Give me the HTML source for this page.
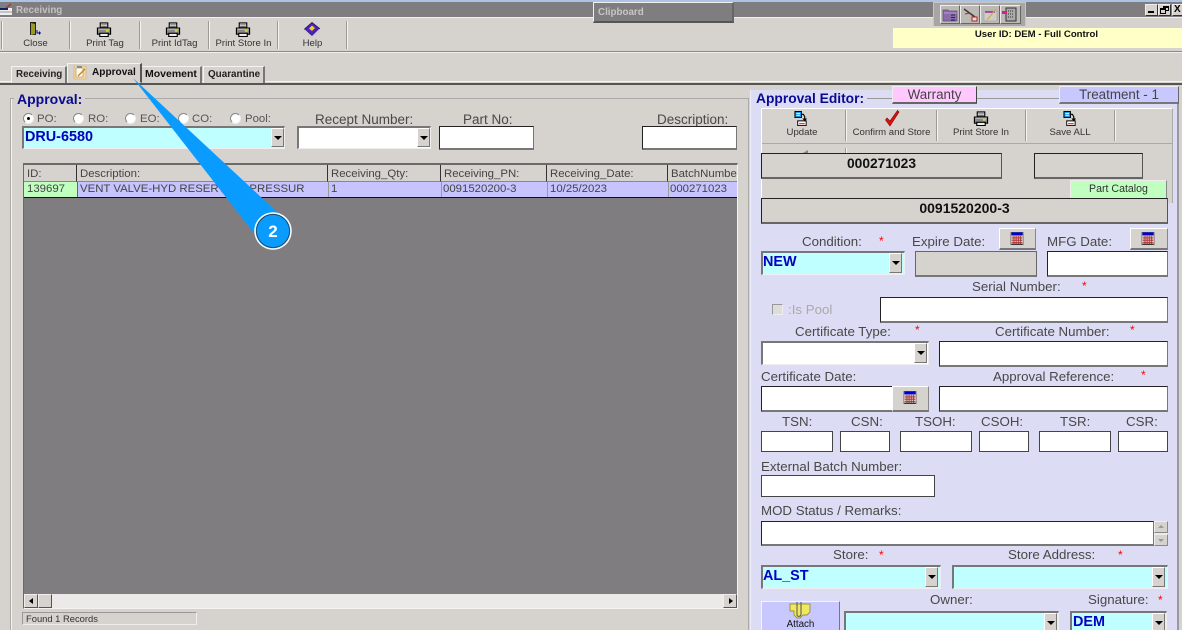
<!DOCTYPE html>
<html><head><meta charset="utf-8"><style>
html,body{margin:0;padding:0;background:#fff}
#p{position:relative;width:1182px;height:630px;overflow:hidden;background:#d6d3ce;font-family:"Liberation Sans",sans-serif;color:#444}
#p div,#p svg,#p span.a{position:absolute;box-sizing:border-box;white-space:nowrap}
.l{font-size:13.3px;line-height:15px;color:#484848}
.t{font-size:9.6px;line-height:11px;color:#333;text-align:center}
.sep{width:2px;border-left:1px solid #9c9a96;border-right:1px solid #f4f3f0}
.i{background:#fff;border:1px solid #777;border-top:1px solid #222;border-left:1px solid #222;border-bottom:2px solid #777}
.c{background:#c0ffff;border:2px solid #777;border-bottom:1px solid #eee;border-right:1px solid #eee;color:#0000c0;font-weight:bold;font-size:14.4px;line-height:17px;padding-left:0}
.w{background:#fff}
.b{background:#d6d3ce;width:13px;border:1px solid #777;border-top-color:#fff;border-left-color:#fff}
.b:after{content:"";position:absolute;left:2px;top:50%;margin-top:-2px;border:4px solid transparent;border-top:4px solid #000;border-bottom:0}
.r{color:#f00;font-size:12px;line-height:12px}
.g{font-size:11.4px;line-height:15px;color:#444}
.h{height:17px;top:165px;background:#d6d3ce;border-right:1px solid #333;border-bottom:1px solid #888;padding:2px 0 0 3px;font-size:11.4px;line-height:14px;color:#444;overflow:hidden}
.o{background:#d6d3ce;border:1px solid #555;border-top:1px solid #222;border-left:1px solid #222;border-bottom:2px solid #666;color:#111;font-size:14px;line-height:16px;text-align:center}
.rd{width:11px;height:11px;border-radius:50%;background:#fff;border:1px solid #888;border-right-color:#eee;border-bottom-color:#eee}
.cal{background:#d6d3ce;border:1px solid #888;border-top-color:#fff;border-left-color:#fff;border-bottom:2px solid #777}
</style></head><body><div id="p">
<svg width="0" height="0" style="display:none"><defs>
<symbol id="pr" viewBox="0 0 16 16"><path d="M4 1h8v5H4z" fill="#eee" stroke="#000" stroke-width="1.200"/><path d="M5 3h6M5 4.800h6" stroke="#444" stroke-width=".8"/><path d="M1 6.500h14v6.500H1z" fill="#888" stroke="#000" stroke-width="1.200"/><path d="M2 7.500h12" stroke="#ddd"/><path d="M3.500 12h9v3.500h-9z" fill="#eee" stroke="#000" stroke-width="1.200"/><path d="M10 9.500h3" stroke="#ee0" stroke-width="1.500"/></symbol>
<symbol id="sv" viewBox="0 0 14 16"><path d="M0.500 0.500h7v6.500h-7z" fill="#0a8fe8" stroke="#000" stroke-width="1"/><path d="M2 2.500h4M2 4.500h4" stroke="#fff"/><path d="M7 3.500h2.500l1.500 2.500v3" fill="none" stroke="#000" stroke-width="1.200"/><path d="M8.500 8l2.500 3 2.500-3z" fill="#000"/><path d="M3.500 10.500h9v5h-9z" fill="#fff" stroke="#000"/><path d="M5 13.500h6" stroke="#e33" stroke-width="1.300"/></symbol>
<symbol id="cl" viewBox="0 0 16 16"><path d="M1 1h14v14H1z" fill="#ddd" stroke="#444" stroke-width=".6"/><path d="M1.500 1h13v3.500h-13z" fill="#0000c8"/><path d="M2 5h12v9H2z" fill="#e8d8d0"/><path d="M2 6.500h12M2 8.500h12M2 10.500h12M2 12.500h12M4.500 5v9M7 5v9M9.500 5v9M12 5v9" stroke="#a33" stroke-width=".9"/><path d="M1.500 14.500h13" stroke="#222" stroke-width="1.200"/></symbol>
</defs></svg>

<!-- title bar -->
<div style="left:0;top:0;width:1182px;height:2px;background:#a9c4e4"></div>
<div style="left:0;top:2px;width:1182px;height:15px;background:#807d80"></div>
<div style="left:0;top:17px;width:1182px;height:1px;background:#f1f0ed"></div>
<svg style="left:0;top:3px" width="13" height="13" viewBox="0 0 13 13"><path d="M0 5h12v7H0z" fill="#eee"/><path d="M0 5h8v2H0z" fill="#0a246a"/><path d="M0 9h12" stroke="#999"/><path d="M6 5l5-4" stroke="#a33" stroke-width="1.400"/></svg>
<div style="left:16px;top:4px;font-size:9.8px;line-height:13px;font-weight:bold;color:#c4c2c0">Receiving</div>
<div style="left:593px;top:2px;width:141px;height:21px;background:#807d80;border:1px solid #f0efec;border-right:2px solid #666;border-bottom:2px solid #555"></div>
<div style="left:598px;top:7px;font-size:9.800px;line-height:12px;font-weight:bold;color:#c8c6c4">Clipboard</div>
<div style="left:933px;top:2px;width:93px;height:24px;background:#a8a6a4;border:1px solid #c8c6c4;border-bottom:0"></div>
<div style="left:940px;top:5px;width:20px;height:19px;background:#bdbab6;border:1px solid #eee;border-right-color:#666;border-bottom-color:#666"></div>
<div style="left:960px;top:5px;width:20px;height:19px;background:#bdbab6;border:1px solid #eee;border-right-color:#666;border-bottom-color:#666"></div>
<div style="left:980px;top:5px;width:20px;height:19px;background:#bdbab6;border:1px solid #eee;border-right-color:#666;border-bottom-color:#666"></div>
<div style="left:1000px;top:5px;width:21px;height:19px;background:#bdbab6;border:1px solid #eee;border-right-color:#666;border-bottom-color:#666"></div>
<svg style="left:942px;top:7px" width="17" height="15" viewBox="0 0 17 15"><path d="M1 3h5l1 1h8v10H1z" fill="#8a6ca8" stroke="#5c4a78" stroke-width=".7"/><path d="M2 6h13" stroke="#b49acc"/><path d="M9 8h4M9 10.500h4M9 13h4" stroke="#2d1f55" stroke-width=".9" fill="none"/></svg>
<svg style="left:962px;top:7px" width="17" height="15" viewBox="0 0 17 15"><path d="M2 2l11 8" stroke="#3a3a3a" stroke-width="1.500"/><path d="M3 7l5-1M10 10h5v4h-5z" fill="#ddd" stroke="#b22" stroke-width="1"/></svg>
<svg style="left:982px;top:7px" width="17" height="15" viewBox="0 0 17 15"><path d="M2 4h13v10H2z" fill="#cfcdc8" stroke="#999" stroke-width=".6"/><path d="M3 5h10" stroke="#a4309a" stroke-width="1.600"/><path d="M5 13l9-11" stroke="#c9b040" stroke-width="1.200"/></svg>
<svg style="left:1002px;top:7px" width="17" height="15" viewBox="0 0 17 15"><path d="M4 1h10v13H4z" fill="#aaa" stroke="#333"/><path d="M6 4h6M6 7h6M6 10h6" stroke="#333" stroke-dasharray="1 1"/><path d="M0 4h5v3H0z" fill="#d0208a"/></svg>
<div style="left:1145px;top:4px;width:13px;height:12px;background:#d6d3ce;border:1px solid #eee;border-right-color:#333;border-bottom-color:#333"></div>
<div style="left:1148px;top:11px;width:6px;height:2px;background:#000"></div>
<div style="left:1158px;top:4px;width:13px;height:12px;background:#d6d3ce;border:1px solid #eee;border-right-color:#333;border-bottom-color:#333"></div>
<div style="left:1163px;top:6px;width:6px;height:5px;border:1px solid #000;border-top-width:2px"></div>
<div style="left:1160px;top:8px;width:6px;height:6px;border:1px solid #000;border-top-width:2px;background:#d6d3ce"></div>
<div style="left:1172px;top:4px;width:10px;height:12px;background:#d6d3ce;border:1px solid #eee;border-bottom-color:#333;border-right:0"></div>
<div style="left:1174px;top:4px;font-size:10px;line-height:12px;font-weight:bold;color:#000">X</div>

<!-- toolbar -->
<div style="left:0;top:51px;width:1182px;height:1px;background:#8c8a86"></div>
<div style="left:0;top:52px;width:1182px;height:1px;background:#f1f0ed"></div>
<div class="sep" style="left:1px;top:21px;height:28px"></div>
<div class="sep" style="left:69px;top:21px;height:28px"></div>
<div class="sep" style="left:139px;top:21px;height:28px"></div>
<div class="sep" style="left:208px;top:21px;height:28px"></div>
<div class="sep" style="left:277px;top:21px;height:28px"></div>
<div class="sep" style="left:346px;top:21px;height:28px"></div>
<svg style="left:27px;top:21px" width="16" height="16" viewBox="0 0 16 16"><path d="M3 1h6v13H3z" fill="#222"/><path d="M4 2l4 1v10l-4 1z" fill="#9a9a20"/><path d="M10 9v3h3" fill="none" stroke="#0000b0"/><path d="M12 10l2 2-2 2z" fill="#0000b0"/></svg>
<svg style="left:96px;top:22px" width="16" height="15"><use href="#pr"/></svg>
<svg style="left:165px;top:22px" width="16" height="15"><use href="#pr"/></svg>
<svg style="left:235px;top:22px" width="16" height="15"><use href="#pr"/></svg>
<svg style="left:304px;top:22px" width="16" height="16" viewBox="0 0 16 16"><path d="M0.500 7L8 0.500l7.500 6L8 13.500z" fill="#5020c0" stroke="#201060" stroke-width=".8"/><path d="M5 6.500l3-3 3 2.500-3 3z" fill="#f0d020"/><path d="M0.500 8l7.500 7 7.500-7.500" fill="none" stroke="#ccc" stroke-width="1.500"/></svg>
<div class="t" style="left:2px;top:38px;width:67px">Close</div>
<div class="t" style="left:71px;top:38px;width:68px">Print Tag</div>
<div class="t" style="left:141px;top:38px;width:67px">Print IdTag</div>
<div class="t" style="left:210px;top:38px;width:67px">Print Store In</div>
<div class="t" style="left:279px;top:38px;width:67px">Help</div>
<div style="left:893px;top:28px;width:289px;height:20px;background:#ffffc8"></div>
<div style="left:893px;top:29px;width:205px;text-align:right;font-size:9.6px;line-height:12px;font-weight:bold;color:#111">User ID: DEM - Full Control</div>

<!-- tabs -->
<div style="left:0;top:81px;width:1182px;height:1px;background:#f4f3f0"></div>
<div style="left:0;top:83px;width:1182px;height:2px;background:#555"></div>
<div style="left:11px;top:66px;width:56px;height:17px;background:#d6d3ce;border:1px solid #f4f3f0;border-right:2px solid #777;border-bottom:0"></div>
<div style="left:67px;top:63px;width:75px;height:20px;background:#d6d3ce;border:1px solid #f4f3f0;border-right:2px solid #555;border-bottom:1px solid #d6d3ce"></div>
<div style="left:142px;top:66px;width:60px;height:17px;background:#d6d3ce;border-right:2px solid #777;border-top:1px solid #f4f3f0"></div>
<div style="left:203px;top:66px;width:62px;height:17px;background:#d6d3ce;border:1px solid #f4f3f0;border-right:2px solid #777;border-bottom:0"></div>
<div style="left:16px;top:68px;font-size:9.800px;line-height:13px;font-weight:bold;color:#222">Receiving</div>
<svg style="left:73px;top:65px" width="15" height="15" viewBox="0 0 15 15"><path d="M1 1h12v13H1z" fill="#f4d8a8" stroke="#d9a860" stroke-width=".6"/><path d="M3 3h7v9H3z" fill="#fffbe8" stroke="#888" stroke-width=".6"/><path d="M4 1h5v2H4z" fill="#888"/><path d="M5 11l7-7" stroke="#d88000" stroke-width="1.300"/></svg>
<div style="left:92px;top:66px;font-size:10.100px;line-height:13px;font-weight:bold;color:#111">Approval</div>
<div style="left:145px;top:68px;font-size:10.500px;line-height:13px;font-weight:bold;color:#111">Movement</div>
<div style="left:208px;top:68px;font-size:9.900px;line-height:13px;font-weight:bold;color:#222">Quarantine</div>

<!-- left group -->
<div style="left:10px;top:98px;width:739px;height:532px;border-top:1px solid #aaa;border-left:1px solid #aaa;border-right:1px solid #aaa"></div>
<div style="left:11px;top:99px;width:1px;height:531px;background:#f4f3f0"></div>
<div style="left:14px;top:91px;padding:0 3px;background:#d6d3ce;color:#0a0a90;font-size:14px;font-weight:bold;line-height:16px">Approval:</div>

<div class="rd" style="left:23px;top:113px"></div><div style="left:27px;top:117px;width:3px;height:3px;background:#000;border-radius:50%"></div>
<div class="rd" style="left:73px;top:113px"></div><div class="rd" style="left:125px;top:113px"></div><div class="rd" style="left:178px;top:113px"></div><div class="rd" style="left:230px;top:113px"></div>
<div class="g" style="left:37px;top:112px;color:#555">PO:</div>
<div class="g" style="left:88px;top:112px;color:#555">RO:</div>
<div class="g" style="left:140px;top:112px;color:#555">EO:</div>
<div class="g" style="left:192px;top:112px;color:#555">CO:</div>
<div class="g" style="left:245px;top:112px;color:#555">Pool:</div>

<div class="c" style="left:22px;top:126px;width:263px;height:23px;line-height:19px;padding-left:1px">DRU-6580</div>
<div class="b" style="left:271px;top:128px;height:19px"></div>
<div class="l" style="left:315px;top:112px;font-size:13.500px">Recept Number:</div>
<div class="c w" style="left:297px;top:126px;width:134px;height:23px"></div>
<div class="b" style="left:417px;top:128px;height:19px"></div>
<div class="l" style="left:463px;top:112px;font-size:13.500px">Part No:</div>
<div class="i" style="left:439px;top:126px;width:95px;height:24px"></div>
<div class="l" style="left:657px;top:112px;font-size:13.500px">Description:</div>
<div class="i" style="left:642px;top:126px;width:95px;height:24px"></div>

<!-- grid -->
<div style="left:23px;top:163px;width:715px;height:446px;background:#807d80;border-top:2px solid #6a6a6a;border-left:1px solid #6a6a6a;border-right:1px solid #f4f3f0;border-bottom:1px solid #f4f3f0"></div>
<div class="h" style="left:24px;width:53px">ID:</div>
<div class="h" style="left:77px;width:251px">Description:</div>
<div class="h" style="left:328px;width:113px">Receiving_Qty:</div>
<div class="h" style="left:441px;width:106px">Receiving_PN:</div>
<div class="h" style="left:547px;width:121px">Receiving_Date:</div>
<div class="h" style="left:668px;width:69px;border-right:0">BatchNumbe</div>
<div style="left:24px;top:182px;width:713px;height:15px;background:#c6c3ff"></div>
<div style="left:24px;top:182px;width:53px;height:15px;background:#c0ffc0"></div>
<div style="left:24px;top:197px;width:713px;height:1px;background:#111"></div>
<div style="left:77px;top:182px;width:1px;height:15px;background:#666"></div>
<div style="left:328px;top:182px;width:1px;height:15px;background:#999"></div>
<div style="left:441px;top:182px;width:1px;height:15px;background:#999"></div>
<div style="left:547px;top:182px;width:1px;height:15px;background:#999"></div>
<div style="left:668px;top:182px;width:1px;height:15px;background:#999"></div>
<div class="g" style="left:27px;top:182px">139697</div>
<div class="g" style="left:80px;top:182px">VENT VALVE-HYD RESERVOIR PRESSUR</div>
<div class="g" style="left:331px;top:182px">1</div>
<div class="g" style="left:443px;top:182px">0091520200-3</div>
<div class="g" style="left:550px;top:182px">10/25/2023</div>
<div class="g" style="left:670px;top:182px">000271023</div>
<div style="left:24px;top:594px;width:713px;height:14px;background:#eceae8"></div>
<div style="left:24px;top:594px;width:14px;height:14px;background:#d6d3ce;border:1px solid #eee;border-right-color:#555;border-bottom-color:#555"></div>
<div style="left:29px;top:598px;border:3px solid transparent;border-right:4px solid #000;border-left:0"></div>
<div style="left:38px;top:594px;width:14px;height:14px;background:#d6d3ce;border:1px solid #eee;border-right-color:#555;border-bottom-color:#555"></div>
<div style="left:723px;top:594px;width:14px;height:14px;background:#d6d3ce;border:1px solid #eee;border-right-color:#555;border-bottom-color:#555"></div>
<div style="left:729px;top:598px;border:3px solid transparent;border-left:4px solid #000;border-right:0"></div>
<div style="left:22px;top:612px;width:175px;height:13px;border:1px solid #eee;border-top-color:#999;border-left-color:#999;font-size:9.400px;line-height:11px;padding-left:3px;color:#333">Found 1 Records</div>

<!-- right panel -->
<div style="left:750px;top:90px;width:429px;height:540px;background:#dcdcf4;border-left:1px solid #eeeefa;border-right:2px solid #9a9a9e"></div>
<div style="left:755px;top:98px;width:418px;height:1px;background:#999"></div>
<div style="left:753px;top:91px;padding:0 3px;background:#dcdcf4;color:#0a0a90;font-size:13.800px;font-weight:bold;line-height:16px">Approval Editor:</div>
<div style="left:892px;top:86px;width:85px;height:18px;background:#ffc8ff;border:1px solid #eee;border-right:1px solid #444;border-bottom:2px solid #666;font-size:13.400px;line-height:16px;text-align:center;color:#444">Warranty</div>
<div style="left:1059px;top:86px;width:120px;height:18px;background:#c8c8ff;border:1px solid #eee;border-right:1px solid #666;border-bottom:2px solid #777;font-size:13.400px;line-height:16px;text-align:center;color:#444">Treatment - 1</div>
<div style="left:761px;top:108px;width:412px;height:95px;background:#d6d3ce;border-top:1px solid #fff;border-left:1px solid #fff;border-right:1px solid #aaa"></div>
<div style="left:762px;top:143px;width:411px;height:1px;background:#aaa"></div>
<div class="sep" style="left:845px;top:110px;height:31px"></div>
<div class="sep" style="left:936px;top:110px;height:31px"></div>
<div class="sep" style="left:1025px;top:110px;height:31px"></div>
<div class="sep" style="left:1114px;top:110px;height:31px"></div>
<div class="sep" style="left:845px;top:148px;height:6px"></div>
<svg style="left:794px;top:111px" width="14" height="15"><use href="#sv"/></svg>
<svg style="left:884px;top:110px" width="16" height="17" viewBox="0 0 16 17"><path d="M1.500 10l4.500 6L15 2l-1.500-1.500L6 11 3 8z" fill="#e01010" stroke="#700" stroke-width=".6"/></svg>
<svg style="left:973px;top:111px" width="16" height="15"><use href="#pr"/></svg>
<svg style="left:1063px;top:111px" width="14" height="15"><use href="#sv"/></svg>
<div class="t" style="left:762px;top:127px;width:80px">Update</div>
<div class="t" style="left:847px;top:127px;width:89px">Confirm and Store</div>
<div class="t" style="left:937px;top:127px;width:88px">Print Store In</div>
<div class="t" style="left:1026px;top:127px;width:88px">Save ALL</div>
<svg style="left:800px;top:149px" width="10" height="5"><path d="M1 5l7-4v4z" fill="#888"/></svg>
<div class="o" style="left:761px;top:153px;width:241px;height:26px;font-weight:bold;font-size:13.800px;line-height:19px">000271023</div>
<div class="o" style="left:1034px;top:153px;width:109px;height:26px"></div>
<div style="left:1070px;top:180px;width:97px;height:18px;background:#c0ffc0;border:1px solid #eee;border-right:1px solid #888;border-bottom:0;font-size:10.600px;line-height:17px;text-align:center;color:#333">Part Catalog</div>
<div class="o" style="left:761px;top:198px;width:407px;height:26px;font-weight:bold;font-size:14px;line-height:19px">0091520200-3</div>

<div class="l" style="left:802px;top:234px">Condition:</div><div class="r" style="left:879px;top:235px">*</div>
<div class="l" style="left:912px;top:234px">Expire Date:</div>
<div class="l" style="left:1047px;top:234px">MFG Date:</div>
<div class="cal" style="left:999px;top:228px;width:37px;height:22px"></div><svg style="left:1010px;top:231px" width="14" height="15"><use href="#cl"/></svg>
<div class="cal" style="left:1130px;top:228px;width:38px;height:22px"></div><svg style="left:1141px;top:231px" width="14" height="15"><use href="#cl"/></svg>
<div class="c" style="left:761px;top:251px;width:144px;height:24px;line-height:18px">NEW</div>
<div class="b" style="left:889px;top:253px;height:20px"></div>
<div class="i" style="left:915px;top:251px;width:122px;height:26px;background:#d6d3ce;border:1px solid #666;border-bottom:2px solid #777"></div>
<div class="i" style="left:1047px;top:251px;width:121px;height:26px"></div>

<div class="l" style="left:972px;top:279px">Serial Number:</div><div class="r" style="left:1082px;top:280px">*</div>
<div style="left:772px;top:304px;width:11px;height:11px;background:#ddd;border:1px solid #999;border-right-color:#eee;border-bottom-color:#eee"></div>
<div class="l" style="left:788px;top:302px;color:#aaa">:Is Pool</div>
<div class="i" style="left:880px;top:297px;width:288px;height:26px"></div>

<div class="l" style="left:795px;top:324px">Certificate Type:</div><div class="r" style="left:915px;top:324px">*</div>
<div class="l" style="left:995px;top:324px">Certificate Number:</div><div class="r" style="left:1130px;top:324px">*</div>
<div class="c w" style="left:761px;top:341px;width:168px;height:24px"></div>
<div class="b" style="left:914px;top:343px;height:20px"></div>
<div class="i" style="left:939px;top:341px;width:229px;height:26px"></div>

<div class="l" style="left:761px;top:369px">Certificate Date:</div>
<div class="l" style="left:993px;top:369px">Approval Reference:</div><div class="r" style="left:1141px;top:369px">*</div>
<div class="i" style="left:761px;top:386px;width:143px;height:26px"></div>
<div class="cal" style="left:892px;top:386px;width:37px;height:26px"></div><svg style="left:903px;top:390px" width="14" height="15"><use href="#cl"/></svg>
<div class="i" style="left:939px;top:386px;width:229px;height:26px"></div>

<div class="l" style="left:782px;top:414px">TSN:</div>
<div class="l" style="left:851px;top:414px">CSN:</div>
<div class="l" style="left:915px;top:414px">TSOH:</div>
<div class="l" style="left:981px;top:414px">CSOH:</div>
<div class="l" style="left:1060px;top:414px">TSR:</div>
<div class="l" style="left:1126px;top:414px">CSR:</div>
<div class="i" style="left:761px;top:431px;width:72px;height:21px;border-width:1px;border-color:#444"></div>
<div class="i" style="left:840px;top:431px;width:50px;height:21px;border-width:1px;border-color:#444"></div>
<div class="i" style="left:900px;top:431px;width:72px;height:21px;border-width:1px;border-color:#444"></div>
<div class="i" style="left:979px;top:431px;width:50px;height:21px;border-width:1px;border-color:#444"></div>
<div class="i" style="left:1039px;top:431px;width:72px;height:21px;border-width:1px;border-color:#444"></div>
<div class="i" style="left:1118px;top:431px;width:50px;height:21px;border-width:1px;border-color:#444"></div>

<div class="l" style="left:761px;top:459px">External Batch Number:</div>
<div class="i" style="left:761px;top:475px;width:174px;height:22px;border-width:1px;border-color:#444"></div>
<div class="l" style="left:761px;top:503px">MOD Status / Remarks:</div>
<div class="i" style="left:761px;top:521px;width:393px;height:25px"></div>
<div style="left:1154px;top:521px;width:14px;height:25px;background:#eceae8"></div>
<div style="left:1154px;top:521px;width:14px;height:12px;background:#d6d3ce;border:1px solid #eee;border-right-color:#888;border-bottom-color:#888"></div>
<div style="left:1154px;top:534px;width:14px;height:12px;background:#d6d3ce;border:1px solid #eee;border-right-color:#888;border-bottom-color:#888"></div>
<div style="left:1158px;top:525px;border:3px solid transparent;border-bottom:3px solid #999;border-top:0"></div>
<div style="left:1158px;top:539px;border:3px solid transparent;border-top:3px solid #999;border-bottom:0"></div>

<div class="l" style="left:833px;top:547px">Store:</div><div class="r" style="left:879px;top:549px">*</div>
<div class="l" style="left:1008px;top:547px">Store Address:</div><div class="r" style="left:1118px;top:549px">*</div>
<div class="c" style="left:761px;top:565px;width:180px;height:24px;line-height:18px">AL_ST</div>
<div class="b" style="left:925px;top:567px;height:20px"></div>
<div class="c" style="left:952px;top:565px;width:216px;height:24px"></div>
<div class="b" style="left:1152px;top:567px;height:20px"></div>

<div style="left:761px;top:601px;width:79px;height:29px;background:#c8c8ff;border-top:1px solid #f4f4f4;border-left:1px solid #f4f4f4;border-right:1px solid #777"></div>
<svg style="left:789px;top:602px" width="22" height="18" viewBox="0 0 22 18"><path d="M1 2h20v8l-3 3h-4l-3 3H8l-3-3V9H1z" fill="#f0e860" stroke="#807a20" stroke-width=".7"/><path d="M8 0v13M12 0v12M8 13c0 2 4 2 4-1" fill="none" stroke="#555"/></svg>
<div style="left:761px;top:619px;width:79px;text-align:center;font-size:9.800px;line-height:11px;color:#111">Attach</div>
<div class="l" style="left:930px;top:592px">Owner:</div>
<div class="l" style="left:1088px;top:592px">Signature:</div><div class="r" style="left:1158px;top:594px">*</div>
<div class="c" style="left:844px;top:611px;width:215px;height:24px"></div>
<div class="b" style="left:1044px;top:613px;height:20px"></div>
<div class="c" style="left:1070px;top:611px;width:97px;height:24px;line-height:18px;padding-left:1px">DEM</div>
<div class="b" style="left:1152px;top:613px;height:20px"></div>

<!-- strip right of panel -->
<div style="left:1179px;top:86px;width:3px;height:544px;background:#d6d3ce"></div>

<!-- callout -->
<svg style="left:0;top:0" width="1182" height="633">
<path d="M133 78L277 212L253 232Z" fill="#0a9bff"/>
<circle cx="273" cy="231" r="18" fill="#0a9bff" stroke="#fff" stroke-width="1.500"/>
<circle cx="273" cy="231" r="16.500" fill="none" stroke="#333" stroke-width=".7"/>
<text x="273" y="237" text-anchor="middle" font-family="Liberation Sans" font-weight="bold" font-size="17" fill="#fff">2</text>
</svg>
</div></body></html>
